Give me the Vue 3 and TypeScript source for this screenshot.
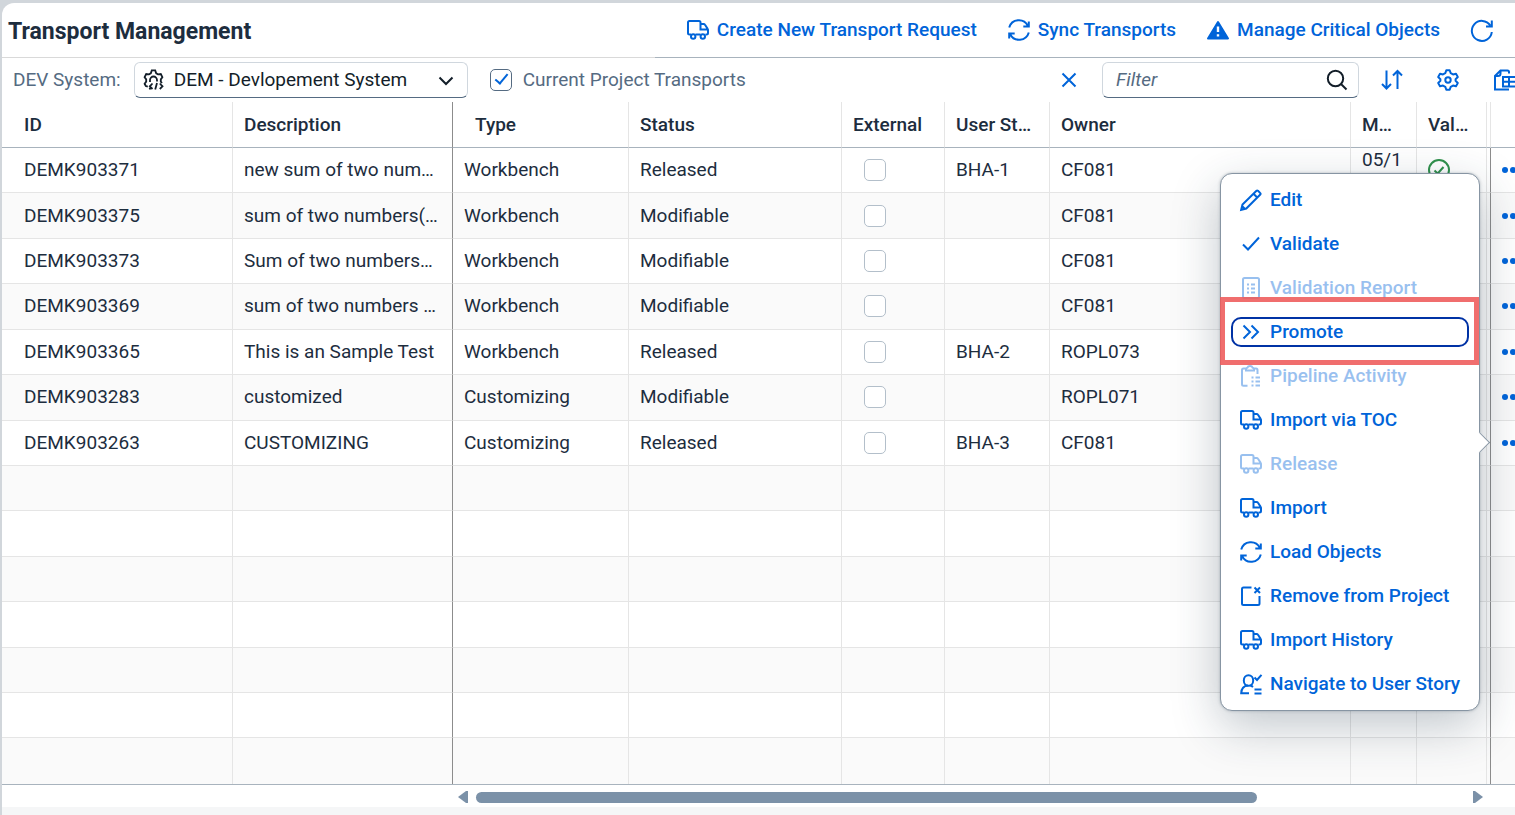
<script setup lang="ts">
import { ref } from 'vue'

type IconName =
  | 'truck' | 'sync' | 'warning' | 'refresh' | 'cogs' | 'chevron' | 'close' | 'search'
  | 'sort' | 'settings' | 'export' | 'edit' | 'check' | 'report' | 'promote' | 'pipeline'
  | 'remove' | 'user' | 'valid' | 'more'

const icons: Record<IconName, string> = {
  truck:
    '<path d="M4 15.500H2.500Q1 15.500 1 14V3.500Q1 2 2.500 2H12Q13.500 2 13.500 3.500V10.500H21M13.500 5H16.500Q17.500 5 18 5.800L20.500 9.600Q21 10.300 21 11V14Q21 15.500 19.500 15.500H18.500M8.500 15.500H13.500"/><circle cx="6.200" cy="17.500" r="2.200"/><circle cx="15.800" cy="17.500" r="2.200"/>',
  sync:
    '<path d="M1.200 8.500A10 10 0 0 1 19.800 6.800M20.800 2.500V7.500H15.300M20.800 13.500A10 10 0 0 1 2.200 15.200M1.200 19.500V14.500H6.700"/>',
  warning:
    '<path fill="currentColor" stroke-linejoin="round" d="M11 3L21 19.500H1Z"/><path stroke="#fff" stroke-width="2.400" d="M11 7.500V13M11 15.200V17.600"/>',
  refresh: '<path d="M20.800 13A10 10 0 1 1 19.300 6.500M20.800 1.500V7.500H15"/>',
  cogs:
    '<path stroke-width="1.800" d="M4.800 17.600L2.800 17L1.600 14.800L3.200 12.600V10.400L1.600 8.200L3.200 5L6 5.400L7.800 4.400L8.800 1.400H12.200L13.200 4.400L15 5.400L17.800 5L19.400 8.200L17.800 10.400V12.600L19 14M6.500 20.500L7.600 18.200M7 13V11A3.500 3.500 0 0 1 14 11V12.500M9.500 14.500L6.800 17.300L9.500 20M12.200 20.500L14 14M16.800 14.500L19.500 17.300L16.800 20"/>',
  chevron: '<path d="M4.500 8.500L11 15L17.500 8.500"/>',
  close: '<path d="M4.500 4.500L17.500 17.500M17.500 4.500L4.500 17.500"/>',
  search: '<circle cx="9.500" cy="9.500" r="7.700"/><path d="M15 15L20.500 20.500"/>',
  sort: '<path d="M5.500 1.500V19.500M1 15L5.500 19.500L10 15M16.500 20V2M12 6.500L16.500 2L21 6.500"/>',
  settings:
    '<path stroke-linejoin="round" d="M9.300 1.200H12.700L13.700 4.200L16 5.400L19 4.800L20.800 8L18.600 10.200V11.800L20.800 14L19 17.200L16 16.600L13.700 17.800L12.700 20.800H9.300L8.300 17.800L6 16.600L3 17.200L1.200 14L3.400 11.800V10.200L1.200 8L3 4.800L6 5.400L8.300 4.200Z"/><circle cx="11" cy="11" r="2.700"/>',
  export:
    '<path d="M16 20.500H2V7L7.500 1.500H14.500Q16 1.500 16 3V4.500M2 7H5Q7.500 7 7.500 4.500V1.500M10 8H23V17.500H10ZM10 12.700H23M16 8V17.500"/>',
  edit:
    '<path d="M1.200 20.800L2.500 15.500L16.500 1.800Q17.200 1.100 18 1.800L20.300 4.100Q21 4.800 20.300 5.500L6.300 19.500ZM13.500 4.800L17.200 8.500M2 17L5 20"/>',
  check: '<path d="M3 11.500L8 16.500L19 4.500"/>',
  report:
    '<rect x="3" y="1" width="16" height="20" rx="1.500"/><path stroke-width="1.800" d="M7 7.500H9M11 7.500H15M7 11.500H9M11 11.500H15M7 15.500H9M11 15.500H15"/>',
  promote: '<path d="M3.500 4.500L10 11L3.500 17.500M11.500 4.500L18 11L11.500 17.500"/>',
  pipeline:
    '<path d="M7.500 20.800H3.500Q2 20.800 2 19.300V5Q2 3.500 3.500 3.500H6M14 3.500H16Q17.500 3.500 17.500 5V9M6 3.500V5.500H14V3.500L12.500 2.500Q12 1 10 1T7.500 2.500ZM11.500 12.500H13.500M15.500 12.500H20M11.500 16.500H13.500M15.500 16.500H20M11.500 20.500H13.500M15.500 20.500H20"/>',
  remove:
    '<path d="M11.500 2.500H3.500Q2 2.500 2 4V18.500Q2 20 3.500 20H18Q19.500 20 19.500 18.500V11M14.500 2.500L20 8M20 2.500L14.500 8"/>',
  user:
    '<path d="M9 20.200H1.200Q1.500 13 8 12.500"/><ellipse cx="8.500" cy="7.500" rx="4.700" ry="5.300"/><path d="M14.500 4.500L17 7L21.500 1.800M10.500 12.500Q11.500 12.800 13 14M14.500 16.500H21.500M14.500 20.500H21.500"/>',
  valid: '<circle cx="11" cy="11" r="10"/><path d="M6.500 11.500L9.700 14.500L15.500 8"/>',
  more:
    '<g fill="currentColor" stroke="none"><circle cx="3" cy="11" r="3"/><circle cx="11" cy="11" r="3"/><circle cx="19" cy="11" r="3"/></g>',
}

const actions: { icon: IconName; label: string }[] = [
  { icon: 'truck', label: 'Create New Transport Request' },
  { icon: 'sync', label: 'Sync Transports' },
  { icon: 'warning', label: 'Manage Critical Objects' },
]

const columns = [
  { key: 'id', label: 'ID' },
  { key: 'desc', label: 'Description' },
  { key: 'type', label: 'Type' },
  { key: 'status', label: 'Status' },
  { key: 'external', label: 'External' },
  { key: 'story', label: 'User St…' },
  { key: 'owner', label: 'Owner' },
  { key: 'modified', label: 'M…' },
  { key: 'valid', label: 'Val…' },
  { key: 'gap', label: '' },
  { key: 'menu', label: '' },
]

interface Transport {
  id: string
  desc: string
  type: string
  status: string
  story: string
  owner: string
  modified?: string
  valid?: boolean
}

const rows: Transport[] = [
  { id: 'DEMK903371', desc: 'new sum of two num…', type: 'Workbench', status: 'Released', story: 'BHA-1', owner: 'CF081', modified: '05/1', valid: true },
  { id: 'DEMK903375', desc: 'sum of two numbers(…', type: 'Workbench', status: 'Modifiable', story: '', owner: 'CF081' },
  { id: 'DEMK903373', desc: 'Sum of two numbers…', type: 'Workbench', status: 'Modifiable', story: '', owner: 'CF081' },
  { id: 'DEMK903369', desc: 'sum of two numbers …', type: 'Workbench', status: 'Modifiable', story: '', owner: 'CF081' },
  { id: 'DEMK903365', desc: 'This is an Sample Test', type: 'Workbench', status: 'Released', story: 'BHA-2', owner: 'ROPL073' },
  { id: 'DEMK903283', desc: 'customized', type: 'Customizing', status: 'Modifiable', story: '', owner: 'ROPL071' },
  { id: 'DEMK903263', desc: 'CUSTOMIZING', type: 'Customizing', status: 'Released', story: 'BHA-3', owner: 'CF081' },
]
const emptyRows = 7

const menuItems: { icon: IconName; label: string; disabled?: boolean; focused?: boolean }[] = [
  { icon: 'edit', label: 'Edit' },
  { icon: 'check', label: 'Validate' },
  { icon: 'report', label: 'Validation Report', disabled: true },
  { icon: 'promote', label: 'Promote', focused: true },
  { icon: 'pipeline', label: 'Pipeline Activity', disabled: true },
  { icon: 'truck', label: 'Import via TOC' },
  { icon: 'truck', label: 'Release', disabled: true },
  { icon: 'truck', label: 'Import' },
  { icon: 'sync', label: 'Load Objects' },
  { icon: 'remove', label: 'Remove from Project' },
  { icon: 'truck', label: 'Import History' },
  { icon: 'user', label: 'Navigate to User Story' },
]

const system = ref('DEM')
const currentOnly = ref(true)
const filter = ref('')
</script>

<template>
  <div class="shell">
    <main class="panel">
      <header class="head">
        <div class="head-title"><h1>Transport Management</h1></div>
        <div class="head-actions">
          <button v-for="a in actions" :key="a.label" class="action" type="button">
            <svg class="icon" viewBox="0 0 22 22" v-html="icons[a.icon]"></svg>{{ a.label }}
          </button>
          <button class="action" type="button" aria-label="Refresh">
            <svg class="icon" viewBox="0 0 22 22" v-html="icons.refresh"></svg>
          </button>
        </div>
      </header>

      <div class="toolbar">
        <label class="muted" for="system">DEV System:</label>
        <div class="field system">
          <svg class="icon" viewBox="0 0 22 22" v-html="icons.cogs"></svg>
          <select id="system" v-model="system">
            <option value="DEM">DEM - Devlopement System</option>
          </select>
          <svg class="icon" viewBox="0 0 22 22" v-html="icons.chevron"></svg>
        </div>
        <div class="project">
          <input id="current" v-model="currentOnly" class="box" type="checkbox" />
          <label class="muted" for="current">Current Project Transports</label>
        </div>
        <div class="tools">
          <button class="action" type="button" aria-label="Clear">
            <svg class="icon" viewBox="0 0 22 22" v-html="icons.close"></svg>
          </button>
          <div class="field search">
            <input v-model="filter" type="text" placeholder="Filter" aria-label="Filter" />
            <svg class="icon" viewBox="0 0 22 22" v-html="icons.search"></svg>
          </div>
          <div class="tool-icons">
            <button class="action" type="button" aria-label="Sort">
              <svg class="icon" viewBox="0 0 22 22" v-html="icons.sort"></svg>
            </button>
            <button class="action" type="button" aria-label="Settings">
              <svg class="icon" viewBox="0 0 22 22" v-html="icons.settings"></svg>
            </button>
            <button class="action" type="button" aria-label="Export">
              <svg class="icon" viewBox="0 0 22 22" v-html="icons.export"></svg>
            </button>
          </div>
        </div>
      </div>

      <div class="table-area">
        <table>
          <colgroup>
            <col v-for="c in columns" :key="c.key" :class="'w-' + c.key" />
          </colgroup>
          <thead>
            <tr>
              <th v-for="c in columns" :key="c.key" :class="'c-' + c.key">{{ c.label }}</th>
            </tr>
          </thead>
          <tbody>
            <tr v-for="r in rows" :key="r.id">
              <td class="c-id">{{ r.id }}</td>
              <td class="c-desc">{{ r.desc }}</td>
              <td class="c-type">{{ r.type }}</td>
              <td class="c-status">{{ r.status }}</td>
              <td class="c-external">
                <input class="box faint" type="checkbox" :aria-label="'External ' + r.id" />
              </td>
              <td class="c-story">{{ r.story }}</td>
              <td class="c-owner">{{ r.owner }}</td>
              <td class="c-modified">{{ r.modified }}</td>
              <td class="c-valid">
                <svg v-if="r.valid" class="icon ok" viewBox="0 0 22 22" v-html="icons.valid"></svg>
              </td>
              <td class="c-gap"></td>
              <td class="c-menu">
                <button class="action" type="button" :aria-label="'Actions ' + r.id">
                  <svg class="icon" viewBox="0 0 22 22" v-html="icons.more"></svg>
                </button>
              </td>
            </tr>
            <tr v-for="n in emptyRows" :key="n">
              <td v-for="c in columns" :key="c.key" :class="'c-' + c.key"></td>
            </tr>
          </tbody>
        </table>
      </div>

      <div class="scroll">
        <svg class="arrow" viewBox="0 0 10 12"><path d="M10 0V12L8 12L0 6L8 0Z" /></svg>
        <div class="track"><div class="thumb"></div></div>
        <svg class="arrow" viewBox="0 0 10 12"><path d="M0 0V12L2 12L10 6L2 0Z" /></svg>
      </div>
    </main>

    <div class="popover">
      <ul>
        <li v-for="m in menuItems" :key="m.label">
          <button class="item" :class="{ focused: m.focused }" type="button" :disabled="m.disabled">
            <svg class="icon" viewBox="0 0 22 22" v-html="icons[m.icon]"></svg>{{ m.label }}
          </button>
          <span v-if="m.focused" class="highlight"></span>
        </li>
      </ul>
    </div>
  </div>
</template>

<style>
body {
  margin: 0;
  overflow: hidden;
}
</style>

<style scoped>
.shell {
  --blue: #0064d9;
  --line: #e5e5e5;
  --strong: #a8b3bd;
  position: relative;
  box-sizing: border-box;
  height: 100vh;
  padding: 3px 0 0 2px;
  background: #d1d6db;
  font-family: Roboto, "Liberation Sans", sans-serif;
  font-size: 19px;
  line-height: 24px;
  color: #1d2d3e;
  overflow: hidden;
}
.panel {
  display: flex;
  flex-direction: column;
  box-sizing: border-box;
  height: 100%;
  padding-bottom: 8px;
  background: linear-gradient(#f5f6f7, #f5f6f7) bottom / 100% 8px no-repeat #fff;
  border-top-left-radius: 12px;
  overflow: hidden;
}
button {
  padding: 0;
  border: 0;
  background: none;
  font: inherit;
  font-weight: 500;
  color: var(--blue);
  white-space: nowrap;
}
.icon {
  flex: none;
  width: 22px;
  height: 22px;
  fill: none;
  stroke: currentColor;
  stroke-width: 2;
  overflow: visible;
}
.head {
  display: flex;
  height: 55px;
}
.head-title {
  flex: 1;
  display: flex;
  align-items: center;
  padding: 3px 0 0 6px;
  border-bottom: 1px solid #d9d9d9;
}
h1 {
  margin: 0;
  font-size: 23px;
  font-weight: 700;
}
.head-actions {
  display: flex;
  align-items: center;
  gap: 31px;
  padding: 0 22px 0 32px;
  border-bottom: 1px solid var(--strong);
}
.action {
  display: flex;
  align-items: center;
  gap: 8px;
}
.toolbar {
  display: flex;
  align-items: center;
  height: 44px;
  padding-left: 11px;
}
.muted {
  color: #556b82;
  white-space: nowrap;
}
.field {
  display: flex;
  align-items: center;
  box-sizing: border-box;
  height: 36px;
  border: 1px solid #d0d7de;
  border-bottom-color: #556b82;
  border-radius: 6px;
  background: #fff;
  color: #131e29;
}
.field select,
.field input {
  flex: 1;
  min-width: 0;
  padding: 0;
  border: 0;
  outline: 0;
  appearance: none;
  background: none;
  font: inherit;
  color: inherit;
}
.field input::placeholder {
  font-style: italic;
  color: #556b82;
  opacity: 1;
}
.system {
  width: 334px;
  margin: 0 22px 0 13px;
  padding: 0 10px 0 8px;
  gap: 9px;
}
.search {
  width: 257px;
  padding: 0 10px 0 13px;
}
.project {
  display: flex;
  align-items: center;
  gap: 11px;
}
.box {
  box-sizing: border-box;
  display: block;
  width: 22px;
  height: 22px;
  margin: 0;
  border: 1px solid #556b82;
  border-radius: 5px;
  appearance: none;
  background: #fff;
}
.box:checked::after {
  content: "";
  display: block;
  box-sizing: border-box;
  width: 7px;
  height: 13px;
  margin: 1px 0 0 7px;
  border: solid var(--blue);
  border-width: 0 2px 2px 0;
  transform: rotate(40deg);
}
.faint {
  border-color: #b3bfca;
}
.tools {
  display: flex;
  align-items: center;
  gap: 22px;
  margin-left: auto;
}
.tool-icons {
  display: flex;
  gap: 34px;
}
.table-area {
  flex: 1;
  min-height: 0;
  border-bottom: 1px solid var(--strong);
}
table {
  width: 100%;
  height: 100%;
  table-layout: fixed;
  border-collapse: separate;
  border-spacing: 0;
}
.w-id { width: 231px; }
.w-desc { width: 220px; }
.w-type { width: 176px; }
.w-status { width: 213px; }
.w-external { width: 103px; }
.w-story { width: 105px; }
.w-modified { width: 66px; }
.w-valid { width: 70px; }
.w-gap { width: 4px; }
.w-menu { width: 24px; }
th,
td {
  box-sizing: border-box;
  padding: 0 0 0 11px;
  border-right: 1px solid var(--line);
  border-bottom: 1px solid var(--line);
  text-align: left;
  white-space: nowrap;
  overflow: hidden;
}
th {
  height: 46px;
  border-bottom-color: var(--strong);
  font-weight: 500;
}
tbody tr {
  height: 7%;
}
tbody tr:nth-child(even) {
  background: #fafafa;
}
tbody tr:last-child td {
  border-bottom: 0;
}
.c-id,
th.c-type,
td.c-external {
  padding-left: 22px;
}
.c-desc,
td.c-gap {
  border-right-color: #8c8c8c;
}
.c-gap {
  padding: 0;
}
.c-menu {
  border-right: 0;
}
td.c-modified {
  vertical-align: top;
}
.ok {
  display: block;
  color: #30914c;
}
.scroll {
  display: flex;
  align-items: center;
  gap: 8px;
  height: 22px;
  padding: 2px 32px 0 456px;
  box-sizing: border-box;
}
.arrow {
  width: 10px;
  height: 12px;
  fill: #7b91a8;
}
.track {
  flex: 1;
}
.thumb {
  width: 79%;
  height: 11px;
  border-radius: 6px;
  background: #7b91a8;
}
.popover {
  position: absolute;
  top: 173px;
  right: 35px;
  box-sizing: border-box;
  width: 260px;
  padding: 11px 10px;
  border: 1px solid #8795a3;
  border-radius: 12px;
  background: #fff;
  box-shadow: 0 16px 48px rgba(34, 53, 72, 0.28), 0 0 3px rgba(34, 53, 72, 0.3);
}
.popover::after {
  content: "";
  position: absolute;
  top: 261px;
  right: -8px;
  width: 14px;
  height: 14px;
  border: solid #8795a3;
  border-width: 1px 1px 0 0;
  background: #fff;
  transform: rotate(45deg);
}
ul {
  display: grid;
  gap: 14px;
  margin: 0;
  padding: 0;
  list-style: none;
}
li {
  position: relative;
}
.item {
  display: flex;
  align-items: center;
  gap: 8px;
  box-sizing: border-box;
  width: 100%;
  height: 30px;
  padding-left: 7px;
  border: 2px solid transparent;
  border-radius: 10px;
}
.item:disabled {
  opacity: 0.4;
}
.focused {
  border-color: #0032a5;
}
.highlight {
  position: absolute;
  inset: -20px -10px -18px -11px;
  border: 5px solid rgba(238, 90, 90, 0.88);
}
</style>
